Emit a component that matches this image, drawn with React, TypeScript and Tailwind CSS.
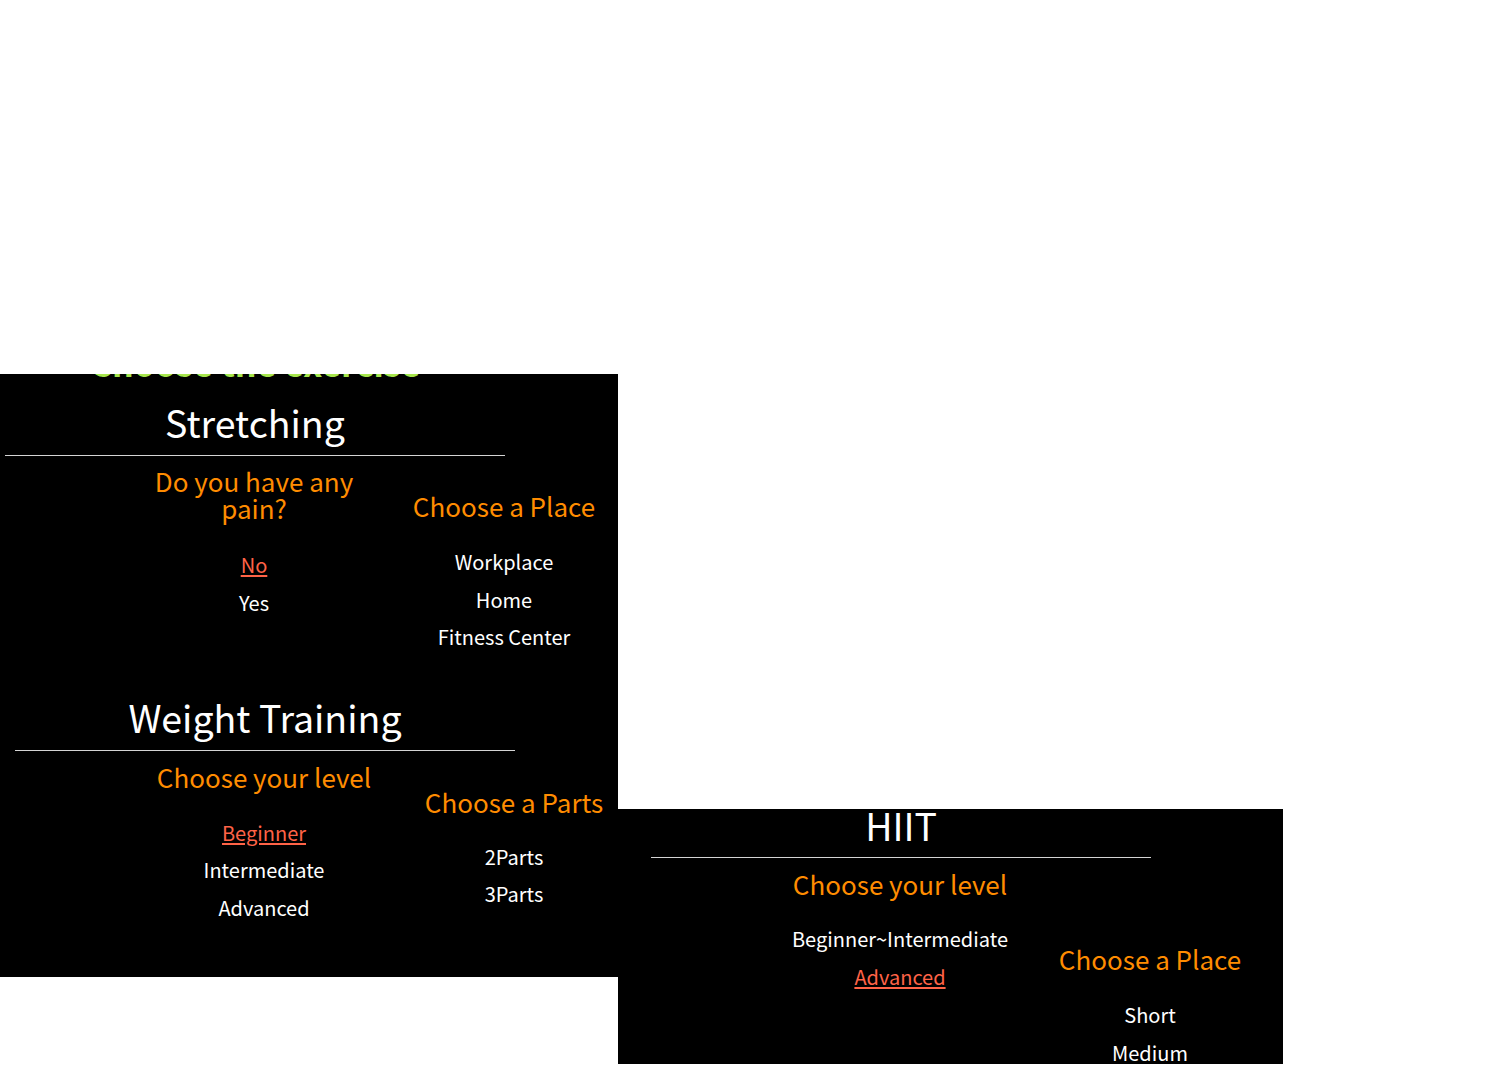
import React from "react";

const font = "font-['Noto_Sans_CJK_KR','Noto_Sans',sans-serif]";

function Item({ text, active, mt }: { text: string; active?: boolean; mt?: string }) {
  return (
    <div
      className={`${mt ?? ""} text-[20px] leading-[37.5px] text-center whitespace-nowrap ${
        active ? "text-[#ff6347] underline underline-offset-[2px]" : "text-white"
      }`}
    >
      {text}
    </div>
  );
}

export default function App() {
  return (
    <div className={`${font} bg-white min-h-[1074px] w-[1489px] flex items-start`}>
      {/* Left panel */}
      <div className="mt-[374px] w-[618px] h-[603px] bg-black overflow-hidden shrink-0">
        <div className="ml-[5px] w-[500px] text-center mt-[-31px] text-[34px] leading-[40px] font-bold text-[#a6e64c] whitespace-nowrap">
          Choose the exercise
        </div>

        {/* Stretching */}
        <div className="ml-[5px]">
          <div className="w-[500px] mt-[19px] text-center text-white text-[37.5px] leading-[40px]">Stretching</div>
          <div className="w-[500px] mt-[13px] h-px bg-[#d4d4d4]" />
          <div className="flex pl-[124px]">
            <div className="w-[250px] shrink-0 flex flex-col items-center">
              <div className="mt-[11px] w-[210px] text-center text-[#ff8c00] text-[26px] leading-[27px]">
                Do you have any pain?
              </div>
              <Item mt="mt-[25px]" text="No" active />
              <Item text="Yes" />
            </div>
            <div className="w-[250px] shrink-0 flex flex-col items-center">
              <div className="mt-[36px] text-center text-[#ff8c00] text-[26px] leading-[28px] whitespace-nowrap">
                Choose a Place
              </div>
              <Item mt="mt-[23px]" text="Workplace" />
              <Item text="Home" />
              <Item text="Fitness Center" />
            </div>
          </div>
        </div>

        {/* Weight Training */}
        <div className="ml-[15px]">
          <div className="w-[500px] mt-[41px] text-center text-white text-[37.5px] leading-[40px]">Weight Training</div>
          <div className="w-[500px] mt-[13px] h-px bg-[#d4d4d4]" />
          <div className="flex pl-[124px]">
            <div className="w-[250px] shrink-0 flex flex-col items-center">
              <div className="mt-[12px] text-center text-[#ff8c00] text-[26px] leading-[28px] whitespace-nowrap">
                Choose your level
              </div>
              <Item mt="mt-[23px]" text="Beginner" active />
              <Item text="Intermediate" />
              <Item text="Advanced" />
            </div>
            <div className="w-[250px] shrink-0 flex flex-col items-center">
              <div className="mt-[37px] text-center text-[#ff8c00] text-[26px] leading-[28px] whitespace-nowrap">
                Choose a Parts
              </div>
              <Item mt="mt-[22px]" text="2Parts" />
              <Item text="3Parts" />
            </div>
          </div>
        </div>
      </div>

      {/* Right panel */}
      <div className="mt-[809px] w-[665px] h-[255px] bg-black overflow-hidden shrink-0">
        <div className="ml-[33px]">
          <div className="w-[500px] mt-[-4px] text-center text-white text-[37.5px] leading-[40px]">HIIT</div>
          <div className="w-[500px] mt-[12px] h-px bg-[#d4d4d4]" />
          <div className="flex pl-[124px]">
            <div className="w-[250px] shrink-0 flex flex-col items-center">
              <div className="mt-[12px] text-center text-[#ff8c00] text-[26px] leading-[28px] whitespace-nowrap">
                Choose your level
              </div>
              <Item mt="mt-[22px]" text="Beginner~Intermediate" />
              <Item text="Advanced" active />
            </div>
            <div className="w-[250px] shrink-0 flex flex-col items-center">
              <div className="mt-[87px] text-center text-[#ff8c00] text-[26px] leading-[28px] whitespace-nowrap">
                Choose a Place
              </div>
              <Item mt="mt-[23px]" text="Short" />
              <Item text="Medium" />
              <Item text="Long" />
            </div>
          </div>
        </div>
      </div>
    </div>
  );
}
